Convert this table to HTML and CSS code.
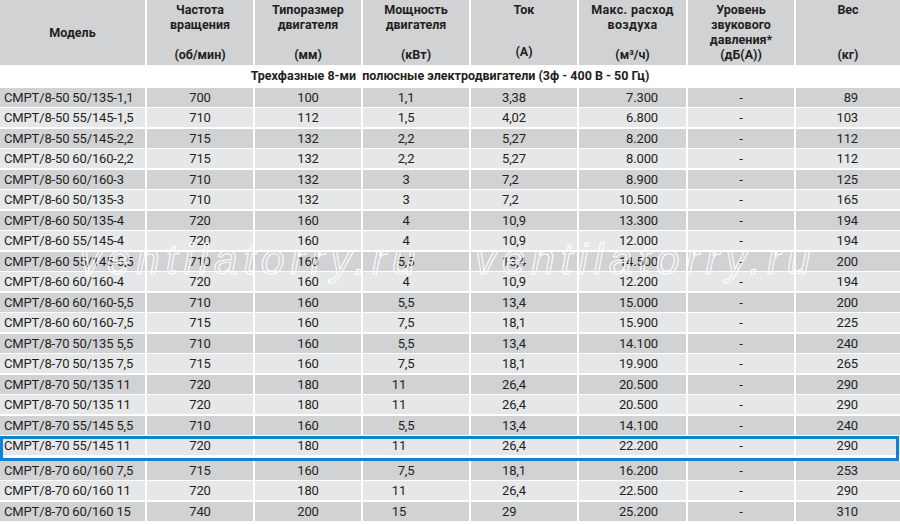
FILE: index.html
```html
<!DOCTYPE html>
<html lang="ru">
<head>
<meta charset="utf-8">
<title>СМРТ/8</title>
<link rel="stylesheet" href="styles.css">
</head>
<body>
<div class="sheet">
  <div class="row head">
    <div class="hc model">Модель</div>
    <div class="hc"><span>Частота<br>вращения</span><span>(об/мин)</span></div>
    <div class="hc"><span>Типоразмер<br>двигателя</span><span>(мм)</span></div>
    <div class="hc"><span>Мощность<br>двигателя</span><span>(кВт)</span></div>
    <div class="hc"><span>Ток</span><span class="up">(А)</span></div>
    <div class="hc"><span class="wide">Макс. расход<br>воздуха</span><span>(м³/ч)</span></div>
    <div class="hc"><span>Уровень<br>звукового<br>давления*</span><span>(дБ(А))</span></div>
    <div class="hc"><span>Вес</span><span>(кг)</span></div>
  </div>
  <div class="section">Трехфазные 8-ми&nbsp; полюсные электродвигатели (3ф - 400 В - 50 Гц)</div>
  <div class="rows">
    <div class="row"><div class="c1">СМРТ/8-50 50/135-1,1</div><div class="cc">700</div><div class="cc">100</div><div class="c4">1,1</div><div class="c5">3,38</div><div class="c6">7.300</div><div class="cc">-</div><div class="c8">89</div></div>
    <div class="row"><div class="c1">СМРТ/8-50 55/145-1,5</div><div class="cc">710</div><div class="cc">112</div><div class="c4">1,5</div><div class="c5">4,02</div><div class="c6">6.800</div><div class="cc">-</div><div class="c8">103</div></div>
    <div class="row"><div class="c1">СМРТ/8-50 55/145-2,2</div><div class="cc">715</div><div class="cc">132</div><div class="c4">2,2</div><div class="c5">5,27</div><div class="c6">8.200</div><div class="cc">-</div><div class="c8">112</div></div>
    <div class="row"><div class="c1">СМРТ/8-50 60/160-2,2</div><div class="cc">715</div><div class="cc">132</div><div class="c4">2,2</div><div class="c5">5,27</div><div class="c6">8.000</div><div class="cc">-</div><div class="c8">112</div></div>
    <div class="row"><div class="c1">СМРТ/8-50 60/160-3</div><div class="cc">710</div><div class="cc">132</div><div class="c4">3</div><div class="c5">7,2</div><div class="c6">8.900</div><div class="cc">-</div><div class="c8">125</div></div>
    <div class="row"><div class="c1">СМРТ/8-60 50/135-3</div><div class="cc">710</div><div class="cc">132</div><div class="c4">3</div><div class="c5">7,2</div><div class="c6">10.500</div><div class="cc">-</div><div class="c8">165</div></div>
    <div class="row"><div class="c1">СМРТ/8-60 50/135-4</div><div class="cc">720</div><div class="cc">160</div><div class="c4">4</div><div class="c5">10,9</div><div class="c6">13.300</div><div class="cc">-</div><div class="c8">194</div></div>
    <div class="row"><div class="c1">СМРТ/8-60 55/145-4</div><div class="cc">720</div><div class="cc">160</div><div class="c4">4</div><div class="c5">10,9</div><div class="c6">12.000</div><div class="cc">-</div><div class="c8">194</div></div>
    <div class="row"><div class="c1">СМРТ/8-60 55/145-5,5</div><div class="cc">710</div><div class="cc">160</div><div class="c4">5,5</div><div class="c5">13,4</div><div class="c6">14.500</div><div class="cc">-</div><div class="c8">200</div></div>
    <div class="row"><div class="c1">СМРТ/8-60 60/160-4</div><div class="cc">720</div><div class="cc">160</div><div class="c4">4</div><div class="c5">10,9</div><div class="c6">12.200</div><div class="cc">-</div><div class="c8">194</div></div>
    <div class="row"><div class="c1">СМРТ/8-60 60/160-5,5</div><div class="cc">710</div><div class="cc">160</div><div class="c4">5,5</div><div class="c5">13,4</div><div class="c6">15.000</div><div class="cc">-</div><div class="c8">200</div></div>
    <div class="row"><div class="c1">СМРТ/8-60 60/160-7,5</div><div class="cc">715</div><div class="cc">160</div><div class="c4">7,5</div><div class="c5">18,1</div><div class="c6">15.900</div><div class="cc">-</div><div class="c8">225</div></div>
    <div class="row"><div class="c1">СМРТ/8-70 50/135 5,5</div><div class="cc">710</div><div class="cc">160</div><div class="c4">5,5</div><div class="c5">13,4</div><div class="c6">14.100</div><div class="cc">-</div><div class="c8">240</div></div>
    <div class="row"><div class="c1">СМРТ/8-70 50/135 7,5</div><div class="cc">715</div><div class="cc">160</div><div class="c4">7,5</div><div class="c5">18,1</div><div class="c6">19.900</div><div class="cc">-</div><div class="c8">265</div></div>
    <div class="row"><div class="c1">СМРТ/8-70 50/135 11</div><div class="cc">720</div><div class="cc">180</div><div class="c4 two">11</div><div class="c5">26,4</div><div class="c6">20.500</div><div class="cc">-</div><div class="c8">290</div></div>
    <div class="row"><div class="c1">СМРТ/8-70 50/135 11</div><div class="cc">720</div><div class="cc">180</div><div class="c4 two">11</div><div class="c5">26,4</div><div class="c6">20.500</div><div class="cc">-</div><div class="c8">290</div></div>
    <div class="row"><div class="c1">СМРТ/8-70 55/145 5,5</div><div class="cc">710</div><div class="cc">160</div><div class="c4">5,5</div><div class="c5">13,4</div><div class="c6">14.100</div><div class="cc">-</div><div class="c8">240</div></div>
    <div class="row selected"><div class="c1">СМРТ/8-70 55/145 11</div><div class="cc">720</div><div class="cc">180</div><div class="c4 two">11</div><div class="c5">26,4</div><div class="c6">22.200</div><div class="cc">-</div><div class="c8">290</div></div>
    <div class="row"><div class="c1">СМРТ/8-70 60/160 7,5</div><div class="cc">715</div><div class="cc">160</div><div class="c4">7,5</div><div class="c5">18,1</div><div class="c6">16.200</div><div class="cc">-</div><div class="c8">253</div></div>
    <div class="row"><div class="c1">СМРТ/8-70 60/160 11</div><div class="cc">720</div><div class="cc">180</div><div class="c4 two">11</div><div class="c5">26,4</div><div class="c6">22.500</div><div class="cc">-</div><div class="c8">290</div></div>
    <div class="row"><div class="c1">СМРТ/8-70 60/160 15</div><div class="cc">740</div><div class="cc">200</div><div class="c4 two">15</div><div class="c5">29</div><div class="c6">25.200</div><div class="cc">-</div><div class="c8">310</div></div>
  </div>
  <div class="wm wm1">ventilatorry.ru</div>
  <div class="wm wm2">ventilatorry.ru</div>
</div>
</body>
</html>
```

FILE: styles.css
```css
html, body {
  margin: 0;
  padding: 0;
  background: #ffffff;
}

.sheet {
  position: relative;
  width: 900px;
  height: 524px;
  overflow: hidden;
  font-family: Roboto, "Liberation Sans", sans-serif;
  color: #231f20;
}

.row {
  display: grid;
  grid-template-columns: 145px 106px 106px 106px 106px 107px 106px 104px;
  column-gap: 2px;
}

.head {
  height: 65px;
}

.hc {
  background: #d1d2d4;
  display: flex;
  flex-direction: column;
  justify-content: space-between;
  align-items: center;
  text-align: center;
  padding: 2px 0 3px;
  font-weight: 700;
  font-size: 12.5px;
  line-height: 15px;
  box-sizing: border-box;
}

.hc.model {
  justify-content: center;
  padding: 0;
}

.hc .up {
  margin-bottom: 3px;
}

.hc .wide {
  letter-spacing: 0.3px;
}

.section {
  height: 22.5px;
  line-height: 22px;
  text-align: center;
  font-weight: 700;
  font-size: 12.5px;
  white-space: pre;
}

.rows {
  display: flex;
  flex-direction: column;
  gap: 2px;
}

.rows .row {
  height: 18.5px;
  font-size: 13px;
  letter-spacing: -0.15px;
  line-height: 19px;
}

.rows .row > div {
  background: #d1d2d4;
  white-space: nowrap;
}

.rows .row:nth-child(even) > div {
  background: #e6e7e8;
}

.c1 {
  padding-left: 4px;
}

.cc {
  text-align: center;
}

.c4 {
  text-align: center;
  padding-right: 20px;
}

.c4.two {
  padding-right: 34px;
}

.c5 {
  padding-left: 31px;
}

.c6 {
  text-align: right;
  padding-right: 28px;
}

.c8 {
  text-align: right;
  padding-right: 42px;
}

.row.selected {
  position: relative;
  margin-bottom: 4px;
}

.row.selected::after {
  content: "";
  position: absolute;
  top: 0;
  left: 0;
  right: 1px;
  bottom: -6px;
  border: 3px solid #0f82d2;
}

.wm {
  position: absolute;
  top: 239px;
  font-family: "Liberation Sans", sans-serif;
  font-style: italic;
  font-size: 42px;
  line-height: 42px;
  letter-spacing: 6px;
  color: transparent;
  -webkit-text-stroke: 1px #ffffff;
  white-space: nowrap;
  pointer-events: none;
}

.wm1 {
  left: 80px;
}

.wm2 {
  left: 475px;
}
```
